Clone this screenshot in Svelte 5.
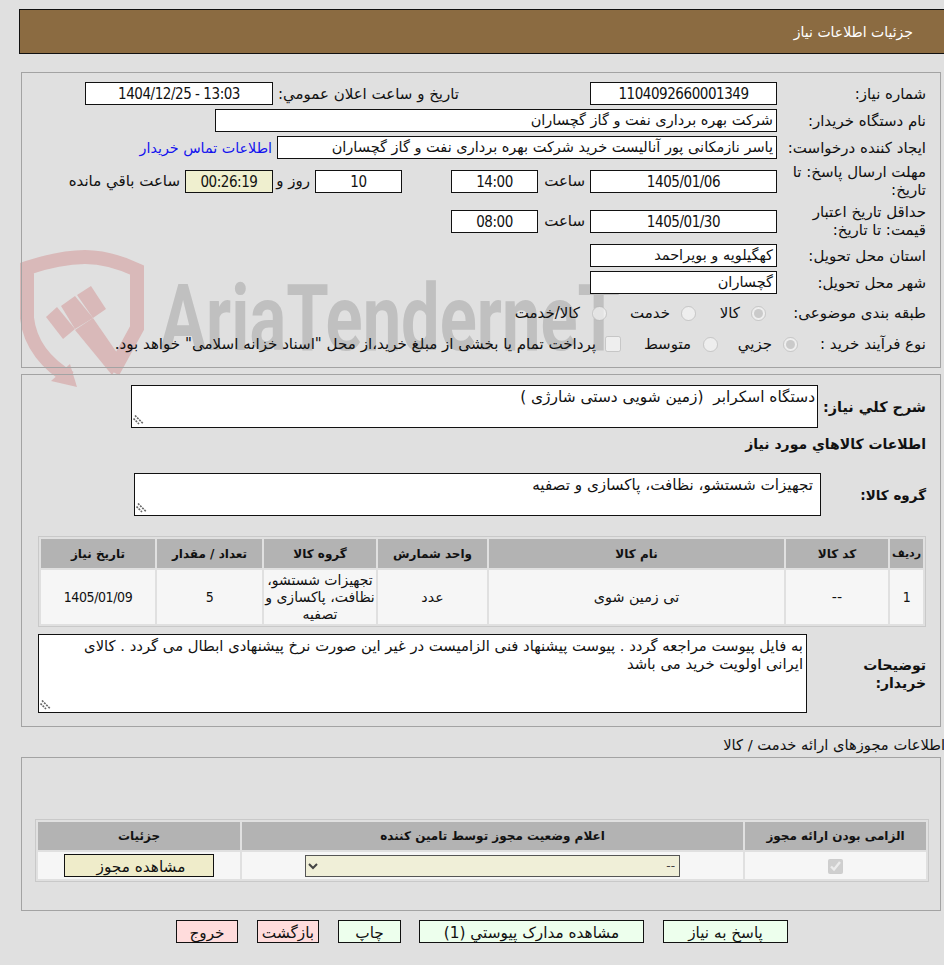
<script>
  const heads = ['ردیف', 'کد کالا', 'نام کالا', 'واحد شمارش', 'گروه کالا', 'تعداد / مقدار', 'تاریخ نیاز'];
  const cells = ['1', '--', 'تی زمین شوی', 'عدد', 'تجهیزات شستشو، نظافت، پاکسازی و تصفیه', '5', '1405/01/09'];
</script>

{#snippet grip()}
  <svg class="grip" width="11" height="11" viewBox="0 0 11 11" aria-hidden="true">
    <path d="M2 0.5 L10 8.5 M0.5 3.5 L6 9" fill="none" stroke="#666" stroke-width="1.6" stroke-dasharray="2 1" />
  </svg>
{/snippet}

<div class="page" dir="rtl">
  <svg class="mark" width="944" height="400" viewBox="0 0 944 400" aria-hidden="true">
    <path class="shield" d="M113 372 L137 328 L137 270 C120 262 103 257 85 257 C65 257 45 262 27 268 L27 318 C30 345 48 365 70 378" />
    <polygon class="red" points="70,364 77,387 51,381" />
    <polygon class="red" points="46,317 57,307 75,329 63,339" />
    <polygon class="red" points="61,306 75,296 93,318 75,329" />
    <polygon class="red" points="77,295 91,286 106,309 93,318" />
    <polygon class="red" points="75,330 93,318 122,360 112,375" />
    <text class="wm" x="160" y="350" textLength="460" lengthAdjust="spacingAndGlyphs" dir="ltr">AriaTenderneT</text>
  </svg>

  <header class="top"><span>جزئیات اطلاعات نیاز</span></header>

  <section class="panel p1">
    <div class="row r1">
      <label class="lab">شماره نیاز:</label>
      <div class="box w187 ctr num">1104092660001349</div>
      <span class="lab2">تاریخ و ساعت اعلان عمومي:</span>
      <div class="box w188 ctr num" dir="ltr">1404/12/25 - 13:03</div>
    </div>
    <div class="row r2">
      <label class="lab">نام دستگاه خریدار:</label>
      <div class="box w562">شرکت بهره برداری نفت و گاز گچساران</div>
    </div>
    <div class="row r3">
      <label class="lab">ایجاد کننده درخواست:</label>
      <div class="box w500">یاسر نازمکانی پور آنالیست خرید شرکت بهره برداری نفت و گاز گچساران</div>
      <a class="link" href="#top">اطلاعات تماس خریدار</a>
    </div>
    <div class="row r4">
      <label class="lab tall">مهلت ارسال پاسخ: تا تاریخ:</label>
      <div class="box w187 ctr num">1405/01/06</div>
      <span class="hour">ساعت</span>
      <div class="box w87 ctr num">14:00</div>
      <div class="box w87 ctr num gap49">10</div>
      <span class="day">روز و</span>
      <div class="box w88 ctr num timer">00:26:19</div>
      <span class="rest">ساعت باقي مانده</span>
    </div>
    <div class="row r5">
      <label class="lab tall">حداقل تاریخ اعتبار قیمت: تا تاریخ:</label>
      <div class="box w187 ctr num">1405/01/30</div>
      <span class="hour">ساعت</span>
      <div class="box w87 ctr num">08:00</div>
    </div>
    <div class="row r6">
      <label class="lab">استان محل تحویل:</label>
      <div class="box w187">کهگیلویه و بویراحمد</div>
    </div>
    <div class="row r7">
      <label class="lab">شهر محل تحویل:</label>
      <div class="box w187">گچساران</div>
    </div>
    <div class="row r8">
      <label class="lab">طبقه بندی موضوعی:</label>
      <div class="opts">
        <input type="radio" disabled checked name="t" class="o1" /><span class="t1">کالا</span>
        <input type="radio" disabled name="t" /><span class="t2">خدمت</span>
        <input type="radio" disabled name="t" /><span class="t3">کالا/خدمت</span>
      </div>
    </div>
    <div class="row r9">
      <label class="lab">نوع فرآیند خرید :</label>
      <div class="opts">
        <input type="radio" disabled checked name="p" class="q1" /><span class="u1">جزیي</span>
        <input type="radio" disabled name="p" /><span class="u2">متوسط</span>
        <input type="checkbox" disabled class="q3" /><span class="u3">پرداخت تمام یا بخشی از مبلغ خرید،از محل "اسناد خزانه اسلامی" خواهد بود.</span>
      </div>
    </div>
  </section>

  <section class="panel p2">
    <div class="row s1">
      <label class="lab strong">شرح کلي نیاز:</label>
      <div class="tw t-a">
        <textarea class="ta" readonly>دستگاه اسکرابر  (زمین شویی دستی شارژی )</textarea>
        {@render grip()}
      </div>
    </div>
    <h3 class="info">اطلاعات کالاهاي مورد نياز</h3>
    <div class="row s2">
      <label class="lab strong group">گروه کالا:</label>
      <div class="tw t-b">
        <textarea class="ta" readonly>تجهیزات شستشو، نظافت، پاکسازی و تصفیه</textarea>
        {@render grip()}
      </div>
    </div>
    <table class="grid goods">
      <thead><tr>{#each heads as h}<th>{h}</th>{/each}</tr></thead>
      <tbody><tr>{#each cells as c, i}<td class:digits={i === 0 || i === 5 || i === 6} class:wrap={i === 4}>{c}</td>{/each}</tr></tbody>
    </table>
    <div class="row s3">
      <label class="lab strong notes">توضیحات خریدار:</label>
      <div class="tw t-c">
        <textarea class="ta" readonly>به فایل پیوست مراجعه گردد . پیوست پیشنهاد فنی الزامیست در غیر این صورت نرخ پیشنهادی ابطال می گردد . کالای ایرانی اولویت خرید می باشد</textarea>
        {@render grip()}
      </div>
    </div>
  </section>

  <div class="lic">اطلاعات مجوزهای ارائه خدمت / کالا</div>

  <section class="panel p3">
    <table class="grid perms">
      <thead><tr><th class="c1">الزامی بودن ارائه مجوز</th><th class="c2">اعلام وضعیت مجوز توسط تامین کننده</th><th class="c3">جزئیات</th></tr></thead>
      <tbody>
        <tr>
          <td><input type="checkbox" class="chk" checked disabled /></td>
          <td><select class="sel" disabled><option>--</option></select></td>
          <td><button class="btn view">مشاهده مجوز</button></td>
        </tr>
      </tbody>
    </table>
  </section>

  <nav class="actions">
    <button class="btn green a1">پاسخ به نیاز</button>
    <button class="btn green a2">مشاهده مدارک پیوستي (1)</button>
    <button class="btn green a3">چاپ</button>
    <button class="btn pink a4">بازگشت</button>
    <button class="btn pink a4">خروج</button>
  </nav>
</div>

<style>
  :global(body) { margin: 0; background: #e0e0e0; overflow: hidden; }
  .page {
    position: relative; width: 944px; height: 965px; overflow: hidden;
    font-family: "DejaVu Sans", sans-serif; font-size: 15px; line-height: 18px; color: #111;
    padding-top: 9px; box-sizing: border-box;
  }
  .mark { position: absolute; left: 0; top: 0; z-index: 0; }
  .shield { fill: none; stroke: #d9b9b9; stroke-width: 14; }
  .red { fill: #d9b9b9; }
  .wm { font-family: "Roboto", sans-serif; font-weight: 700; font-size: 92px; fill: #c0c0c0; direction: ltr; }
  .top, .panel, .lic, .actions { position: relative; z-index: 1; }
  .top {
    height: 43px; margin-left: 19px; margin-right: -20px; border: 1px solid #111; font-size: 14px;
    background: #8b6b41; color: #fff; display: flex; align-items: center; padding-right: 50px;
  }
  .panel { margin-left: 21px; margin-right: 3px; border: 1px solid #a3a3a3; box-sizing: border-box; }
  .p1 { margin-top: 18px; height: 296px; padding-top: 9px; }
  .p2 { margin-top: 6px; height: 353px; padding-top: 10px; }
  .p3 { height: 154px; padding-top: 61px; }
  .row { display: flex; align-items: center; padding-right: 14px; }
  .lab { width: 149px; flex: none; box-sizing: border-box; padding-left: 4px; }
  .strong { font-weight: 700; font-size: 14.4px; }
  .group { font-size: 13.5px; }
  .box {
    box-sizing: border-box; height: 23px; border: 1px solid #111; background: #fff; flex: none;
    padding: 0 3px; line-height: 21px; white-space: nowrap; overflow: hidden; font-size: 14.5px;
  }
  .ctr { text-align: center; }
  .num { font-size: 15px; font-stretch: condensed; letter-spacing: -0.45px; padding-top: 1px; }
  .w187 { width: 187px; }
  .w188 { width: 188px; }
  .w562 { width: 562px; }
  .w500 { width: 500px; }
  .w87 { width: 87px; }
  .w88 { width: 88px; }
  .timer { background: #efefcf; margin-right: 5px; }
  .gap49 { margin-right: 49px; }
  .lab2 { margin-right: 131px; width: 186px; flex: none; white-space: nowrap; }
  .link { color: #1414ee; text-decoration: none; margin-right: 5px; white-space: nowrap; font-size: 14.3px; }
  .hour { width: 52px; flex: none; padding-right: 5px; box-sizing: border-box; white-space: nowrap; }
  .day { margin-right: 5px; width: 32px; flex: none; white-space: nowrap; }
  .rest { margin-right: 5px; white-space: nowrap; }
  .r2 { margin-top: 4px; }
  .r3 { margin-top: 4px; }
  .r4 { margin-top: 4px; height: 36px; }
  .r5 { margin-top: 4px; height: 36px; }
  .r6 { margin-top: 5px; }
  .r7 { margin-top: 4px; }
  .r8 { margin-top: 7px; height: 24px; }
  .r9 { margin-top: 7px; height: 24px; }
  .opts { display: flex; align-items: center; white-space: nowrap; font-size: 15px; }
  .opts input { width: 15px; height: 15px; margin: 0; flex: none; }
  .opts span { flex: none; }
  .opts .o1 { margin-right: 11px; }
  .t1 { margin-right: 11px; width: 44px; }
  .t2 { margin-right: 11px; width: 63px; }
  .t3 { margin-right: 12px; }
  .opts .q1 { margin-right: -21px; }
  .u1 { margin-right: 11px; width: 54px; }
  .u2 { margin-right: 12px; width: 70px; }
  .opts .q3 { width: 16px; height: 16px; }
  .u3 { margin-right: 9px; font-size: 15.1px; }
  .tw { position: relative; flex: none; }
  .grip { position: absolute; left: 2px; bottom: 2px; }
  .ta {
    display: block; box-sizing: border-box; width: 100%; height: 100%; border: 1px solid #111; background: #fff; margin: 0;
    font: inherit; color: inherit; padding: 2px 2px; outline: none; resize: none; overflow: hidden;
  }
  .t-a { width: 687px; height: 43px; margin-right: -41px; font-size: 15.4px; }
  .t-b { width: 687px; height: 43px; margin-right: -44px; font-size: 15.2px; }
  .t-b .ta { padding-right: 7px; }
  .t-c { width: 769px; height: 79px; font-size: 14.8px; }
  .t-c .ta { padding: 2px 3px 2px 10px; }
  .s2 { margin-top: 20px; }
  .s3 { margin-top: 7px; }
  .info { margin: 7px 14px 0 0; font-size: 14px; line-height: 18px; font-weight: 700; }
  .notes { width: 119px; font-size: 14px; }
  .grid { border-collapse: separate; border-spacing: 2px; border: 1px solid #c9c9c9; font-size: 14px; table-layout: fixed; }
  .grid th { background: #b3b3b3; font-size: 12px; font-weight: 700; padding: 0; }
  .grid td { background: #f6f6f6; text-align: center; padding: 0; }
  .goods { width: 888px; margin: 20px 14px 0 0; }
  .goods th { height: 29px; }
  .goods td { height: 54px; line-height: 17px; font-size: 14.3px; }
  .goods td.digits { font-size: 14px; font-stretch: condensed; letter-spacing: -0.4px; }
  .goods td.wrap { font-size: 14px; }
  .goods th:nth-child(1) { width: 33px; font-size: 11px; }
  .goods th:nth-child(2) { width: 102px; }
  .goods th:nth-child(3) { width: 295px; }
  .goods th:nth-child(4) { width: 109px; }
  .goods th:nth-child(5) { width: 112px; }
  .goods th:nth-child(6) { width: 105px; }
  .lic { margin: 8px -1px 0 0; height: 22px; line-height: 20px; white-space: nowrap; font-size: 14.7px; }
  .perms { width: 894px; margin: 0 11px 0 0; }
  .perms th { height: 28px; }
  .perms td { height: 27px; }
  .c1 { width: 181px; }
  .c2 { width: 501px; }
  .chk { width: 15px; height: 15px; margin: 0; vertical-align: middle; }
  .sel {
    width: 375px; height: 22px; box-sizing: border-box; border: 1px solid #555; background: #f0efd8; color: #444;
    font: 12px "DejaVu Sans", sans-serif; opacity: 1; display: block; margin: 0 auto;
  }
  .btn {
    box-sizing: border-box; height: 23px; border: 1px solid #111; font: inherit; font-size: 15.3px; color: #111;
    padding: 2px 0 0; display: block; flex: none; cursor: pointer;
  }
  .view { width: 150px; margin: 0 auto; background: #efecca; padding-left: 4px; }
  .actions { display: flex; gap: 19px; margin: 9px 156px 0 0; }
  .green { background: #edffed; }
  .pink { background: #ffdcdc; }
  .a1 { width: 125px; }
  .a2 { width: 225px; }
  .a3 { width: 63px; margin-right: -1px; }
  .a4 { width: 62px; }
</style>
